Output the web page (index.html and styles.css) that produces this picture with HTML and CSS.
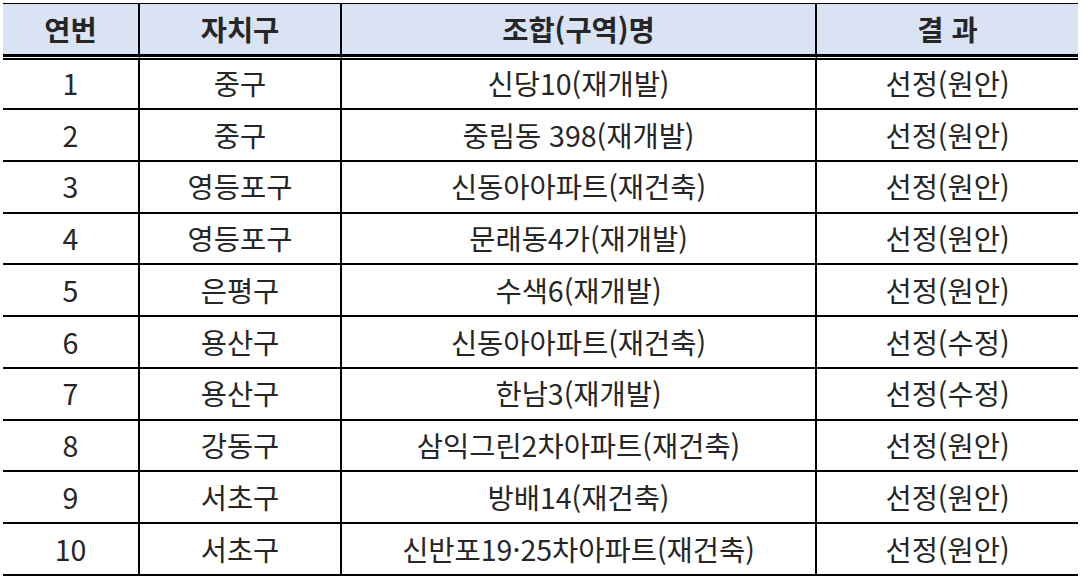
FILE: index.html
```html
<!DOCTYPE html>
<html lang="ko">
<head>
<meta charset="utf-8">
<link rel="stylesheet" href="styles.css">
</head>
<body>
<table class="result-table">
  <colgroup>
    <col class="c-no">
    <col class="c-gu">
    <col class="c-name">
    <col class="c-res">
  </colgroup>
  <thead>
    <tr><th>연번</th><th>자치구</th><th>조합(구역)명</th><th>결 과</th></tr>
  </thead>
  <tbody>
    <tr><td>1</td><td>중구</td><td>신당10(재개발)</td><td>선정(원안)</td></tr>
    <tr><td>2</td><td>중구</td><td>중림동 398(재개발)</td><td>선정(원안)</td></tr>
    <tr><td>3</td><td>영등포구</td><td>신동아아파트(재건축)</td><td>선정(원안)</td></tr>
    <tr><td>4</td><td>영등포구</td><td>문래동4가(재개발)</td><td>선정(원안)</td></tr>
    <tr><td>5</td><td>은평구</td><td>수색6(재개발)</td><td>선정(원안)</td></tr>
    <tr><td>6</td><td>용산구</td><td>신동아아파트(재건축)</td><td>선정(수정)</td></tr>
    <tr><td>7</td><td>용산구</td><td>한남3(재개발)</td><td>선정(수정)</td></tr>
    <tr><td>8</td><td>강동구</td><td>삼익그린2차아파트(재건축)</td><td>선정(원안)</td></tr>
    <tr><td>9</td><td>서초구</td><td>방배14(재건축)</td><td>선정(원안)</td></tr>
    <tr><td>10</td><td>서초구</td><td>신반포19·25차아파트(재건축)</td><td>선정(원안)</td></tr>
  </tbody>
</table>
</body>
</html>
```
FILE: styles.css
```css
html, body {
  margin: 0;
  padding: 0;
  background: #ffffff;
}

body {
  padding: 3px 0 0 3px;
  font-family: "Noto Sans CJK KR", "Noto Sans", sans-serif;
  color: #262626;
}

.result-table {
  width: 1075px;
  table-layout: fixed;
  border-collapse: separate;
  border-spacing: 0;
  border-top: 1px solid #000;
}

.c-no { width: 137px; }
.c-gu { width: 202px; }
.c-name { width: 475px; }
.c-res { width: 261px; }

.result-table th,
.result-table td {
  padding: 0;
  text-align: center;
  vertical-align: middle;
  line-height: 1;
  white-space: nowrap;
}

.result-table th {
  height: 50px;
  background: #dae3f3;
  font-size: 28.5px;
  font-weight: 700;
  border-bottom: 3px solid #000;
}

.result-table th:not(:last-child) {
  border-right: 2px solid #000;
}

.result-table td {
  height: 49.75px;
  font-size: 28.5px;
  font-weight: 400;
  border-bottom: 2px solid #000;
}

.result-table td:not(:last-child) {
  border-right: 2px solid #000;
}

.result-table tbody tr:first-child td {
  height: 50px;
  border-top: 1px solid #fff;
  box-shadow: inset 0 2px 0 #000;
}
```
